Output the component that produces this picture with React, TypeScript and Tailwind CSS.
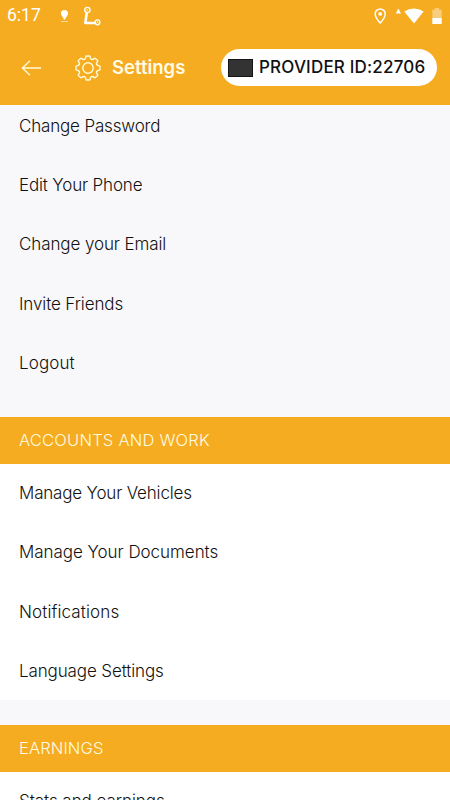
import clsx from "clsx";

interface IItem {
  label: string;
  tracking: string;
}

const profileItems: IItem[] = [
  { label: "Change Password", tracking: "tracking-[-0.17px]" },
  { label: "Edit Your Phone", tracking: "tracking-[-0.16px]" },
  { label: "Change your Email", tracking: "tracking-[-0.1px]" },
  { label: "Invite Friends", tracking: "tracking-[-0.12px]" },
  { label: "Logout", tracking: "tracking-[0.12px]" },
];

const accountItems: IItem[] = [
  { label: "Manage Your Vehicles", tracking: "tracking-[-0.18px]" },
  { label: "Manage Your Documents", tracking: "tracking-[-0.04px]" },
  { label: "Notifications", tracking: "tracking-[0.12px]" },
  { label: "Language Settings", tracking: "tracking-[-0.12px]" },
];

const earningItems: IItem[] = [
  { label: "Stats and earnings", tracking: "tracking-[-0.06px]" },
];

// rounded cog with eight teeth around a circle
function GearIcon() {
  const teeth = 8;
  let d = "";
  for (let i = 0; i < teeth; i++) {
    const mid = (i * 360) / teeth - 90;
    const pt = (r: number, deg: number) => {
      const a = ((mid + deg) * Math.PI) / 180;
      return `${(r * Math.cos(a)).toFixed(2)} ${(r * Math.sin(a)).toFixed(2)}`;
    };
    d += `${i === 0 ? "M" : "L"}${pt(10.3, -13)}Q${pt(12.2, -12)} ${pt(12.1, -7)}L${pt(12.1, 7)}Q${pt(12.2, 12)} ${pt(10.3, 13)}Q${pt(8.6, 22.5)} ${pt(10.3, 32)}`;
  }
  return (
    <svg width="26" height="26" viewBox="-13 -13 26 26" fill="none" stroke="#fffbd8" strokeWidth="1.4" strokeLinejoin="round">
      <path d={d + "Z"} />
      <circle r="5.2" />
    </svg>
  );
}

function StatusBar() {
  return (
    <div className="flex h-[31px] items-center text-white">
      <span className="ml-[7px] w-[50px] font-['Roboto',sans-serif] text-[17.5px] leading-none">6:17</span>
      <svg width="50" height="30" viewBox="55 0 50 30" fill="none" className="-ml-[2px]">
        <path d="M64.5 9a3.6 3.6 0 0 1 3.6 3.6c0 2.4-2.6 3.4-2.9 6h-1.4c-.3-2.6-2.9-3.6-2.9-6A3.6 3.6 0 0 1 64.5 9Z" fill="white" />
        <path d="M61 20.5h7" stroke="white" strokeWidth=".6" />
        <circle cx="87.4" cy="9" r="2.6" stroke="white" strokeWidth="1.4" />
        <circle cx="87.4" cy="9" r=".8" fill="white" />
        <path d="M86.8 11.5L85.3 22H95" stroke="white" strokeWidth="2.6" strokeLinejoin="round" />
        <circle cx="97.5" cy="21.3" r="2.4" stroke="white" strokeWidth="1.4" />
        <circle cx="97.5" cy="21.3" r=".8" fill="white" />
      </svg>
      <svg width="85" height="30" viewBox="365 0 85 30" fill="none" className="ml-auto">
        <path d="M380.2 7.9a5 5 0 0 1 5 5c0 3.6-5 9.1-5 9.1s-5-5.5-5-9.1a5 5 0 0 1 5-5Z" stroke="white" strokeWidth="1.5" />
        <circle cx="380.2" cy="12.9" r="1.9" fill="white" />
        <path d="M398.4 7.5l2.6 5h-5.2Z" fill="white" />
        <path d="M404.2 10.5Q414 4.5 423.6 10.5L414 22.5Z" fill="white" />
        <path d="M432.3 8.7h2.3V7h4.5v1.7h2.6V17h-9.4Z" fill="white" fillOpacity=".4" />
        <path d="M432.3 17h9.4v6h-9.4Z" fill="white" />
      </svg>
    </div>
  );
}

function Header() {
  return (
    <header className="relative z-10 h-[105px] shrink-0 bg-[#f5ac20]">
      <StatusBar />
      <div className="flex h-[73px] items-center pl-[21px] pr-[13px]">
        <svg width="20" height="16" viewBox="0 0 20 16" fill="none" stroke="#fffbd8" strokeWidth="1.4">
          <path d="M9 0.8L1.4 8L9 15.2M1.4 8H20" />
        </svg>
        <div className="ml-[34px] h-[26px]">
          <GearIcon />
        </div>
        <h1 className="ml-[11px] w-[109px] whitespace-nowrap text-[18.5px] font-semibold leading-none text-[#fffbe6]">Settings</h1>
        <div className="flex h-[37px] w-[216px] shrink-0 items-center rounded-full bg-white pl-[7px]">
          <span className="h-[18px] w-[25px] shrink-0 border border-[#151515] bg-[#333]" />
          <span className="ml-[6px] whitespace-nowrap text-[17px] font-medium leading-none tracking-[0.18px] text-[#111]">PROVIDER ID:22706</span>
        </div>
      </div>
    </header>
  );
}

function SectionTitle({ title, tracking }: { title: string; tracking: string }) {
  return (
    <h2 className={clsx("flex h-[46.5px] items-center bg-[#f5ac20] pl-[19px] text-[16.5px] font-light text-[#fffbe0]", tracking)}>
      {title}
    </h2>
  );
}

function ItemList({ items }: { items: IItem[] }) {
  return (
    <ul>
      {items.map((item) => (
        <li
          key={item.label}
          className={clsx("flex h-[59.2px] items-center whitespace-nowrap pl-[19px] text-[17px] font-light text-[#111]", item.tracking)}
        >
          {item.label}
        </li>
      ))}
    </ul>
  );
}

export default function App() {
  return (
    <div className="flex h-[800px] w-[450px] flex-col overflow-hidden bg-[#f8f8fb] font-['Inter',sans-serif]">
      <Header />
      <main className="-mt-[7.8px] flex-1">
        <div className="pb-[24px]">
          <ItemList items={profileItems} />
        </div>
        <SectionTitle title="ACCOUNTS AND WORK" tracking="tracking-[0.22px]" />
        <div className="mb-[25px] h-[236.5px] bg-white pt-[0.8px]">
          <ItemList items={accountItems} />
        </div>
        <SectionTitle title="EARNINGS" tracking="tracking-[0.12px]" />
        <div className="bg-white pt-[0.8px]">
          <ItemList items={earningItems} />
        </div>
      </main>
    </div>
  );
}
